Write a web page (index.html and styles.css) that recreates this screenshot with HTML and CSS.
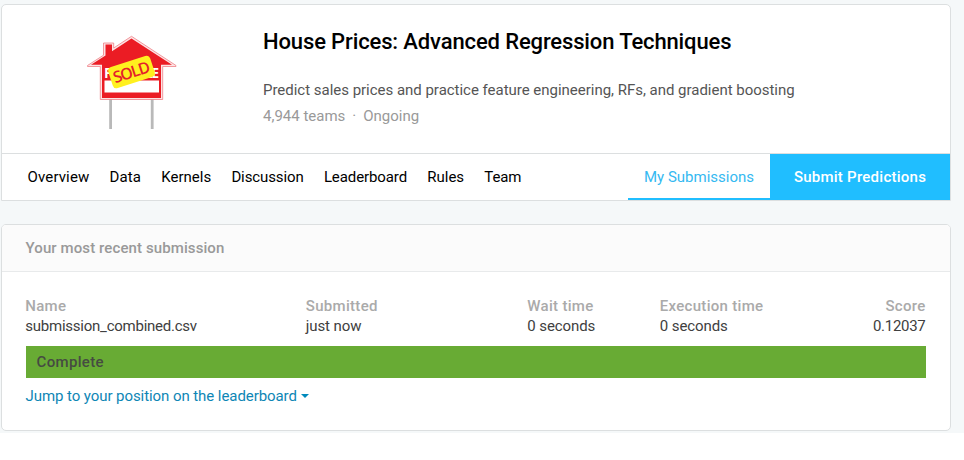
FILE: index.html
```html
<!DOCTYPE html>
<html lang="en">
<head>
<meta charset="utf-8">
<title>House Prices: Advanced Regression Techniques</title>
<link rel="stylesheet" href="styles.css">
</head>
<body>
<main class="page">
  <section class="card competition">
    <header class="hero">
      <svg class="logo" viewBox="0 0 105 105" role="img" aria-label="Sold house sign">
        <path class="post" d="M29.200 69h2.800v30h-2.800zM70.800 69h2.800v30h-2.800z"/>
        <path class="outline" d="M51.500 6.300L96 35.500V36.500H82.700V69.500H20.300V36.500H7.500V35.500L23.500 25.200V13H33.700V18z"/>
        <path class="house" d="M51.500 8.500L92 34.800H81V68H22V34.800H11L25.500 25.500V14.500H32V21.300z"/>
        <path class="panel" d="M24.500 50.500H79v12H24.500z"/>
        <text class="sale" x="24" y="47.700" textLength="55">FOR SALE</text>
        <g transform="rotate(-18 51.500 42)">
          <rect class="stamp" x="29.500" y="31" width="44" height="22" rx="4"/>
          <text class="sold" x="32.500" y="47.700" textLength="38">SOLD</text>
        </g>
      </svg>
      <div class="intro">
        <h1>House Prices: Advanced Regression Techniques</h1>
        <p class="summary">Predict sales prices and practice feature engineering, RFs, and gradient boosting</p>
        <p class="meta"><span>4,944 teams</span><span>·</span><span>Ongoing</span></p>
      </div>
    </header>
    <nav class="tabs">
      <a class="wide">Overview</a><a class="wide">Data</a><a>Kernels</a><a class="narrow">Discussion</a><a class="narrow">Leaderboard</a><a>Rules</a><a class="narrow">Team</a>
      <a class="mine">My Submissions</a><a class="submit">Submit Predictions</a>
    </nav>
  </section>
  <section class="card submission">
    <h2>Your most recent submission</h2>
    <dl class="details">
      <div><dt>Name</dt><dd class="file">submission_combined.csv</dd></div>
      <div><dt>Submitted</dt><dd>just now</dd></div>
      <div><dt>Wait time</dt><dd>0 seconds</dd></div>
      <div><dt>Execution time</dt><dd>0 seconds</dd></div>
      <div class="score"><dt>Score</dt><dd>0.12037</dd></div>
    </dl>
    <p class="status">Complete</p>
    <a class="jump">Jump to your position on the leaderboard<i class="caret"></i></a>
  </section>
</main>
</body>
</html>
```
FILE: styles.css
```css
* {
  box-sizing: border-box;
  margin: 0;
  padding: 0;
}

body {
  background: #fff;
  color: #404040;
  font: 15px/20px Roboto, sans-serif;
}

.page {
  height: 433px;
  padding: 4px 13px 0 1px;
  background: #f5f8f9;
}

.card {
  border: 1px solid #dcdfe0;
  border-radius: 5px;
  background: #fff;
}

.competition {
  height: 197px;
  border-radius: 5px 5px 0 0;
}

.hero {
  display: flex;
  height: 148px;
}

.logo {
  flex: none;
  width: 105px;
  height: 105px;
  margin: 25px 78px 0 78px;
}

.post { fill: #b9b9b9; }
.outline { fill: #fce3e4; stroke: #ef8288; stroke-width: 0.8; }
.house { fill: #eb1c24; }
.panel { fill: #fff; }
.sale { fill: #fff; font: 700 14px "Open Sans", sans-serif; }
.stamp { fill: #fff01f; }
.sold { fill: #e4202a; font: 600 16px "Open Sans", sans-serif; }

h1 {
  margin-top: 24px;
  color: #000;
  font-size: 22px;
  font-weight: 500;
  line-height: 26px;
  letter-spacing: -0.13px;
}

.summary {
  margin-top: 25px;
  color: #555;
  letter-spacing: -0.02px;
}

.meta {
  display: flex;
  gap: 7px;
  margin-top: 6px;
  color: #999;
}

.tabs {
  display: flex;
  height: 47px;
  padding-left: 25.600px;
  gap: 20.200px;
  border-top: 1px solid #dcdfe0;
  color: #000;
  line-height: 46px;
}

.wide { letter-spacing: 0.12px; }
.narrow { letter-spacing: -0.1px; }

.mine {
  width: 142px;
  margin-left: auto;
  margin-right: -20.200px;
  border-bottom: 2px solid #20beff;
  color: #35b9f1;
  text-align: center;
}

.submit {
  width: 180px;
  background: #20beff;
  color: #fff;
  font-weight: 500;
  letter-spacing: 0.25px;
  text-align: center;
}

.submission {
  height: 207px;
  margin-top: 23px;
}

h2 {
  height: 47px;
  padding-left: 23.500px;
  border-bottom: 1px solid #e8eaeb;
  border-radius: 4px 4px 0 0;
  background: #fbfbfb;
  color: #999;
  font-size: 15px;
  font-weight: 500;
  line-height: 47px;
  letter-spacing: 0.1px;
}

.details {
  display: grid;
  grid-template-columns: 280.500px 221.500px 132.500px 1fr auto;
  margin: 24px 24.500px 0 23.300px;
}

dt {
  color: #aaa;
  font-weight: 500;
  letter-spacing: 0.3px;
}

dd { letter-spacing: -0.1px; }
.file { letter-spacing: -0.24px; }
.score { text-align: right; }
.score dd { letter-spacing: -0.28px; }

.status {
  height: 32px;
  margin: 10px 24px 0;
  padding-left: 10.500px;
  background: #68ab34;
  color: #464b42;
  font-weight: 500;
  line-height: 32px;
  letter-spacing: 0.35px;
}

.jump {
  display: flex;
  align-items: center;
  margin: 8px 0 0 23.500px;
  color: #0e86b5;
  letter-spacing: -0.07px;
}

.caret {
  margin-left: 4px;
  border: 4px solid transparent;
  border-top-color: #008abc;
  border-bottom: 0;
}
```
